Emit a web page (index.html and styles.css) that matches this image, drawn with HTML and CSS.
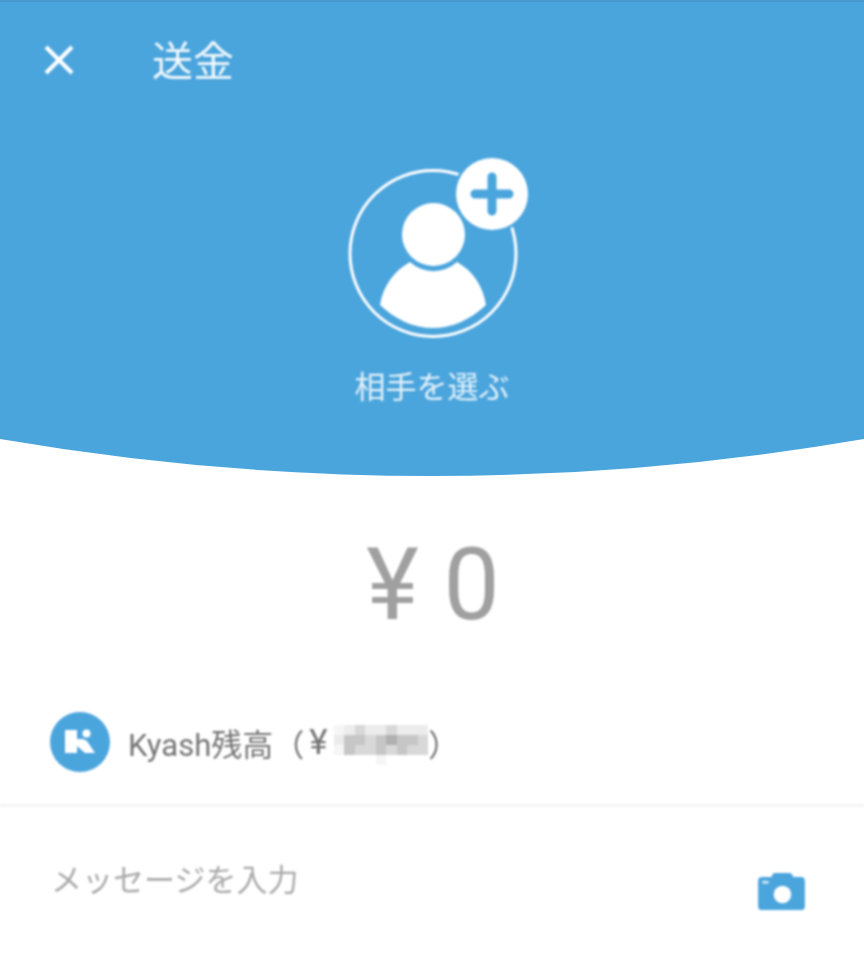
FILE: index.html
```html
<!DOCTYPE html>
<html lang="ja">
<head>
    <meta charset="utf-8">
    <title>送金</title>
    <link rel="stylesheet" href="styles.css">
</head>
<body>
    <div class="screen">
        <div class="hero">
            <div class="topbar soft">
                <svg class="close" viewBox="0 0 30 30"><path d="M2 2 L28 28 M28 2 L2 28" /></svg>
                <span class="title">送金</span>
            </div>
            <div class="picker soft">
                <svg class="avatar" viewBox="0 0 190 190">
                    <circle class="ring" cx="93" cy="103.5" r="83" />
                    <circle class="solid" cx="93.5" cy="84.5" r="31.5" />
                    <path class="solid" d="M40 155 C43 136 54 121 70 112 A34.5 34.5 0 0 0 117 112 C133 121 143 136 146 155 C130 170 112 178 93 178 C74 178 56 170 40 155 Z" />
                    <circle class="badge-edge" cx="152" cy="44" r="39" />
                    <circle class="solid" cx="152" cy="44" r="36" />
                    <path class="plus" d="M152 27 V61 M135 44 H169" />
                </svg>
                <div class="picker-label">相手を選ぶ</div>
            </div>
        </div>
        <svg class="curve" viewBox="0 0 864 37" preserveAspectRatio="none"><path d="M0 0 Q432 74 864 0 Z" /></svg>

        <div class="amount soft"><span>¥</span> <span>0</span></div>

        <div class="balance soft">
            <svg class="k-logo" viewBox="0 0 60 60">
                <circle cx="30" cy="30" r="30" fill="#4ba5dd" />
                <path fill="#fff" d="M15 18 H27 V27 H33 L37 29 L45 41 H35 L27 34 V41 H15 Z" />
                <circle cx="36.5" cy="21.5" r="4" fill="#fff" />
            </svg>
            <span class="balance-text">Kyash残高（</span>
            <span class="yen">¥</span>
            <div class="mosaic">
                <i class="c0"></i><i class="c1"></i><i class="c2"></i><i class="c1"></i><i class="c1"></i><i class="c2"></i><i class="c1"></i><i class="c1"></i><i class="c1"></i>
                <i class="c1"></i><i class="c3"></i><i class="c3"></i><i class="c2"></i><i class="c3"></i><i class="c4"></i><i class="c3"></i><i class="c3"></i><i class="c2"></i>
                <i class="c0"></i><i class="c3"></i><i class="c2"></i><i class="c2"></i><i class="c3"></i><i class="c2"></i><i class="c3"></i><i class="c2"></i><i class="c2"></i>
                <i></i><i></i><i></i><i></i><i class="c0"></i>
            </div>
            <span class="balance-text">）</span>
        </div>

        <div class="message soft">
            <span class="placeholder">メッセージを入力</span>
            <svg class="camera" viewBox="0 0 48 40">
                <path fill="#4ba5dd" d="M14 5 Q14 1 18 1 H32 Q35 1 36 5 H44 Q48 5 48 9 V35 Q48 39 44 39 H4 Q0 39 0 35 V9 Q0 5 4 5 Z" />
                <circle cx="25" cy="23" r="9" fill="#fff" />
                <rect x="4" y="9" width="7" height="3" rx="1.5" fill="#fff" opacity=".7" />
            </svg>
        </div>
    </div>
</body>
</html>
```

FILE: styles.css
```css
html, body {
    margin: 0;
    padding: 0;
    background-color: #fff;
}

.screen {
    width: 864px;
    height: 956px;
    overflow: hidden;
    font-family: "Noto Sans CJK JP", Roboto, sans-serif;
}

/* the reference is an upscaled capture, so content is a little soft */
.soft {
    filter: blur(0.8px);
}

/* Blue header */
.hero {
    height: 439px;
    background-color: #4ba5dd;
    border-top: 2px solid #4697cc;
    box-sizing: border-box;
}

.topbar {
    display: flex;
    align-items: center;
    height: 116px;
    padding-left: 44px;
}

.close {
    width: 30px;
    height: 30px;
    margin-right: 78px;
}

.close path {
    stroke: #fff;
    stroke-width: 4;
    fill: none;
}

.title {
    margin-bottom: 4px;
    font-size: 41px;
    line-height: 1;
    color: #f2f8fc;
}

.picker {
    display: flex;
    flex-direction: column;
    align-items: center;
}

.avatar {
    width: 190px;
    height: 190px;
    margin-top: 32px;
    margin-left: 6px;
}

.ring {
    fill: none;
    stroke: #fff;
    stroke-width: 3;
}

.solid {
    fill: #fff;
}

.badge-edge {
    fill: #4ba5dd;
}

.plus {
    stroke: #4ba5dd;
    stroke-width: 9;
    stroke-linecap: round;
    fill: none;
}

.picker-label {
    margin-top: 23px;
    font-size: 31px;
    line-height: 44px;
    color: #e3f1fa;
}

.curve {
    display: block;
    width: 864px;
    height: 37px;
}

.curve path {
    fill: #4ba5dd;
}

/* Amount */
.amount {
    margin-top: 44px;
    padding-left: 2px;
    text-align: center;
    font-family: Roboto, sans-serif;
    font-size: 100px;
    line-height: 130px;
    color: #a0a0a0;
}

/* Balance row */
.balance {
    display: flex;
    align-items: center;
    height: 60px;
    margin-top: 62px;
    padding-left: 50px;
}

.k-logo {
    width: 60px;
    height: 60px;
    margin-right: 18px;
}

.balance-text {
    font-family: Roboto, "Noto Sans CJK JP", sans-serif;
    font-size: 31px;
    color: #757575;
}

.yen {
    margin-left: 5px;
    font-family: Roboto, sans-serif;
    font-size: 35px;
    color: #757575;
}

.mosaic {
    display: grid;
    grid-template-columns: repeat(9, 10.5px);
    grid-auto-rows: 10px;
    margin-top: 6px;
    margin-left: 6px;
}

.c0 { background-color: #f6f6f6; }
.c1 { background-color: #ececec; }
.c2 { background-color: #d8d8d8; }
.c3 { background-color: #c6c6c6; }
.c4 { background-color: #b0b0b0; }

/* Message row */
.message {
    display: flex;
    justify-content: space-between;
    align-items: flex-start;
    height: 150px;
    margin-top: 32px;
    padding: 48px 59px 0 51px;
    border-top: 3px solid #f4f4f4;
}

.placeholder {
    font-size: 31px;
    line-height: 46px;
    color: #aaaaaa;
}

.camera {
    width: 47px;
    height: 39px;
    margin-top: 17px;
}
```
